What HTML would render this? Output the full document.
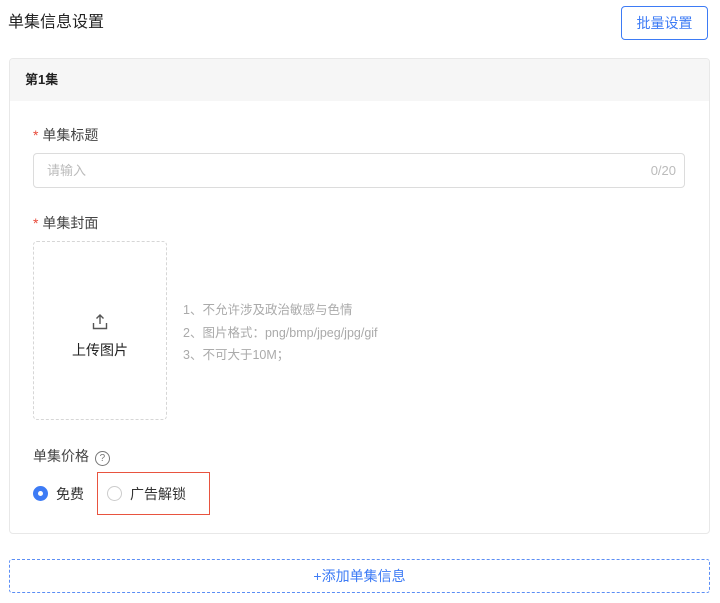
<!DOCTYPE html>
<html><head><meta charset="utf-8"><style>
*{box-sizing:border-box;margin:0;padding:0}
body{width:720px;height:603px;background:#fff;font-family:"Liberation Sans","Noto Sans CJK SC",sans-serif;position:relative;overflow:hidden;color:#333}
.a{position:absolute}
</style></head><body>
<div class="a" style="left:8px;top:12px;font-size:16px;color:#222;line-height:22px">单集信息设置</div>
<div class="a" style="left:621px;top:6px;width:87px;height:34px;border:1px solid #3d7bf5;border-radius:4px;color:#3d7bf5;font-size:14px;text-align:center;line-height:32px">批量设置</div>
<div class="a" style="left:9px;top:58px;width:701px;height:476px;border:1px solid #e8e8e8;border-radius:4px;overflow:hidden">
 <div style="height:42px;background:#f6f6f6;font-size:13px;font-weight:bold;color:#222;padding-left:15px;line-height:42px">第1集</div>
</div>
<div class="a" style="left:33px;top:125px;font-size:14px;color:#444;line-height:20px"><span style="color:#e84a3a">*</span> 单集标题</div>
<div class="a" style="left:33px;top:153px;width:652px;height:35px;border:1px solid #dcdcdc;border-radius:4px;font-size:13px;color:#bbb;line-height:33px;padding:0 8px 0 13px">请输入<span style="float:right">0/20</span></div>
<div class="a" style="left:33px;top:213px;font-size:14px;color:#444;line-height:20px"><span style="color:#e84a3a">*</span> 单集封面</div>
<div class="a" style="left:33px;top:241px;width:134px;height:179px;border:1px dashed #d6d6d6;border-radius:4px"></div>
<svg class="a" style="left:91px;top:313px" width="18" height="17" viewBox="0 0 18 17" fill="none" stroke="#555" stroke-width="1.4"><path d="M9 11V2M5.5 5.5L9 2l3.5 3.5M2.5 10v5.5h13V10"/></svg>
<div class="a" style="left:33px;top:340px;width:134px;text-align:center;font-size:14px;color:#222">上传图片</div>
<div class="a" style="left:183px;top:299px;font-size:12.5px;color:#aaa;line-height:22.5px">1、不允许涉及政治敏感与色情<br>2、图片格式：png/bmp/jpeg/jpg/gif<br>3、不可大于10M；</div>
<div class="a" style="left:33px;top:446px;font-size:14px;color:#444;line-height:20px">单集价格 <span style="display:inline-block;margin-left:2px;width:15px;height:15px;border:1px solid #777;border-radius:50%;font-size:10px;text-align:center;line-height:13px;color:#777;vertical-align:0px">?</span></div>
<div class="a" style="left:33px;top:486px;width:15px;height:15px;border-radius:50%;background:#3d7bf5"><div style="width:5px;height:5px;background:#fff;border-radius:50%;margin:5px"></div></div>
<div class="a" style="left:56px;top:484px;font-size:14px;color:#333">免费</div>
<div class="a" style="left:97px;top:472px;width:113px;height:43px;border:1.5px solid #e8533f"></div>
<div class="a" style="left:107px;top:486px;width:15px;height:15px;border-radius:50%;border:1px solid #ccc"></div>
<div class="a" style="left:130px;top:484px;font-size:14px;color:#333">广告解锁</div>
<div class="a" style="left:9px;top:559px;width:701px;height:34px;border:1px dashed #5b8ef5;border-radius:3px;color:#3d7bf5;font-size:14px;text-align:center;line-height:32px">+添加单集信息</div>
</body></html>
